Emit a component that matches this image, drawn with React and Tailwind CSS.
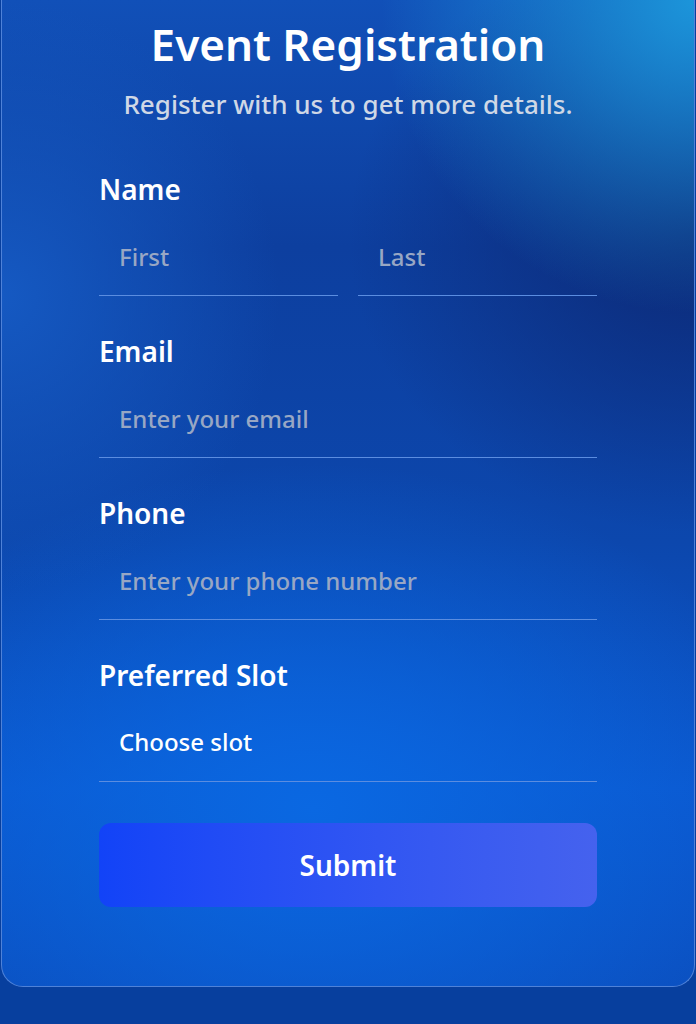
import React from "react";

function Field({ label, children }) {
  return (
    <div className="mb-[38px]">
      <label className="block text-[28px] leading-[34px] font-semibold text-white">{label}</label>
      <div className="mt-[11px]">{children}</div>
    </div>
  );
}

const inputClass =
  "w-full h-[79px] px-5 bg-transparent border-b border-[#5b8de0] outline-none text-[24px] font-medium text-white placeholder:text-[#98a7c4]";

export default function App() {
  return (
    <div className="min-h-screen bg-[#073f9e] font-['Noto_Sans',sans-serif]">
      <div className="mx-px h-[987px] rounded-b-[22px] border border-t-0 border-[#4f82d8] bg-[radial-gradient(circle_at_100%_0%,#1c95da_0%,rgba(28,149,218,0)_26%),radial-gradient(ellipse_50%_30%_at_100%_24%,#0c2a78_0%,rgba(12,42,120,0)_100%),radial-gradient(ellipse_40%_30%_at_0%_30%,#1559c2_0%,rgba(21,89,194,0)_100%),radial-gradient(ellipse_70%_35%_at_45%_82%,#0a68e2_0%,rgba(10,104,226,0)_100%),linear-gradient(180deg,#1150b8_0%,#0d3f9f_25%,#0c47ad_55%,#0b58cf_80%,#0b4fbf_100%)] pt-[18px]">
        <h1 className="text-center text-[44px] leading-[52px] font-semibold text-white">Event Registration</h1>
        <p className="mt-[18px] text-center text-[26px] leading-[32px] font-medium text-[#cfd8e6]">
          Register with us to get more details.
        </p>

        <form className="mt-[52px] px-[97px]" onSubmit={(e) => e.preventDefault()}>
          <Field label="Name">
            <div className="flex gap-5">
              <input className={inputClass} placeholder="First" />
              <input className={inputClass} placeholder="Last" />
            </div>
          </Field>
          <Field label="Email">
            <input className={inputClass} placeholder="Enter your email" />
          </Field>
          <Field label="Phone">
            <input className={inputClass} placeholder="Enter your phone number" />
          </Field>
          <div>
            <label className="block text-[28px] leading-[34px] font-semibold text-white">Preferred Slot</label>
            <div className="mt-[11px]">
              <select className={`${inputClass} appearance-none`} defaultValue="">
                <option value="" className="text-black">Choose slot</option>
                <option className="text-black">Morning</option>
                <option className="text-black">Afternoon</option>
                <option className="text-black">Evening</option>
              </select>
            </div>
          </div>
          <button
            type="submit"
            className="mt-[41px] w-full h-[84px] rounded-[12px] bg-gradient-to-r from-[#1243f7] to-[#4562ee] text-[28px] font-semibold text-white"
          >
            Submit
          </button>
        </form>
      </div>
    </div>
  );
}
